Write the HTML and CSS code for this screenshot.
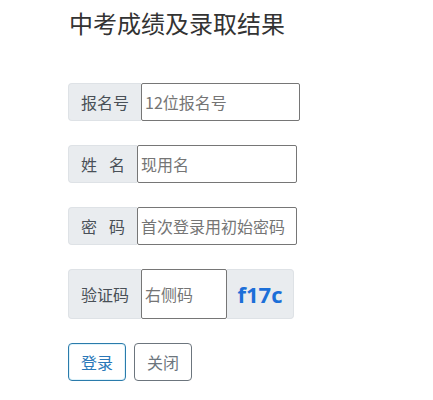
FILE: index.html
```html
<!DOCTYPE html>
<html lang="zh">
<head>
<meta charset="utf-8">
<title>中考成绩及录取结果</title>
<link rel="stylesheet" href="styles.css">
</head>
<body>
<div class="page">
  <h1 class="title">中考成绩及录取结果</h1>
  <form class="form">
    <div class="group">
      <span class="addon">报名号</span>
      <input class="field w159" type="text" placeholder="12位报名号">
    </div>
    <div class="group">
      <span class="addon">姓<span class="sp"></span>名</span>
      <input class="field w160" type="text" placeholder="现用名">
    </div>
    <div class="group">
      <span class="addon">密<span class="sp"></span>码</span>
      <input class="field w160" type="password" placeholder="首次登录用初始密码">
    </div>
    <div class="group tall">
      <span class="addon">验证码</span>
      <input class="field w86" type="text" placeholder="右侧码">
      <span class="addon captcha">f17c</span>
    </div>
    <div class="actions">
      <button type="button" class="btn btn-primary">登录</button>
      <button type="button" class="btn btn-secondary">关闭</button>
    </div>
  </form>
</div>
</body>
</html>
```
FILE: styles.css
```css
* { box-sizing: border-box; }
html, body { margin: 0; padding: 0; background: #fff; }
body {
  font-family: "Noto Sans CJK SC", "Noto Sans", sans-serif;
  color: #212529;
}
.page {
  padding: 8px 0 0 68px;
}
.title {
  margin: 0 0 46px 1px;
  font-size: 24px;
  font-weight: 400;
  line-height: 29px;
  color: #333;
}
.form {
  display: flex;
  flex-direction: column;
  gap: 24px;
}
.group {
  display: flex;
  height: 38px;
}
.group.tall { height: 50px; }
.addon {
  display: flex;
  align-items: center;
  padding: 0 12px;
  font-size: 16px;
  color: #495057;
  background: #e9ecef;
  border: 1px solid #dee2e6;
  border-right: none;
  border-radius: 4px 0 0 4px;
  white-space: nowrap;
}
.sp { display: inline-block; width: 12px; }
.field {
  height: 100%;
  padding: 1px 3px;
  font-family: inherit;
  font-size: 16px;
  color: #212529;
  border: 1px solid #767676;
  border-radius: 2px;
  background: #fff;
  outline: none;
}
.field::placeholder { color: #757575; }
.w159 { width: 159px; }
.w160 { width: 160px; }
.w86 { width: 86px; }
.captcha {
  width: 67px;
  justify-content: center;
  padding: 0;
  border-right: 1px solid #dee2e6;
  border-left: none;
  border-radius: 0 4px 4px 0;
  font-family: "Open Sans", "Liberation Sans", sans-serif;
  font-weight: 700;
  font-size: 22px;
  color: #1c6fd8;
}
.actions {
  display: flex;
  gap: 8px;
}
.btn {
  height: 38px;
  padding: 0 12px;
  font-family: inherit;
  font-size: 16px;
  background: #fff;
  border-radius: 4px;
  cursor: pointer;
}
.btn-primary {
  color: #2a78b8;
  border: 1px solid #2a7bab;
  box-shadow: inset 0 0 0 1px #dff3fb;
}
.btn-secondary {
  color: #6c757d;
  border: 1px solid #6c757d;
}
```
